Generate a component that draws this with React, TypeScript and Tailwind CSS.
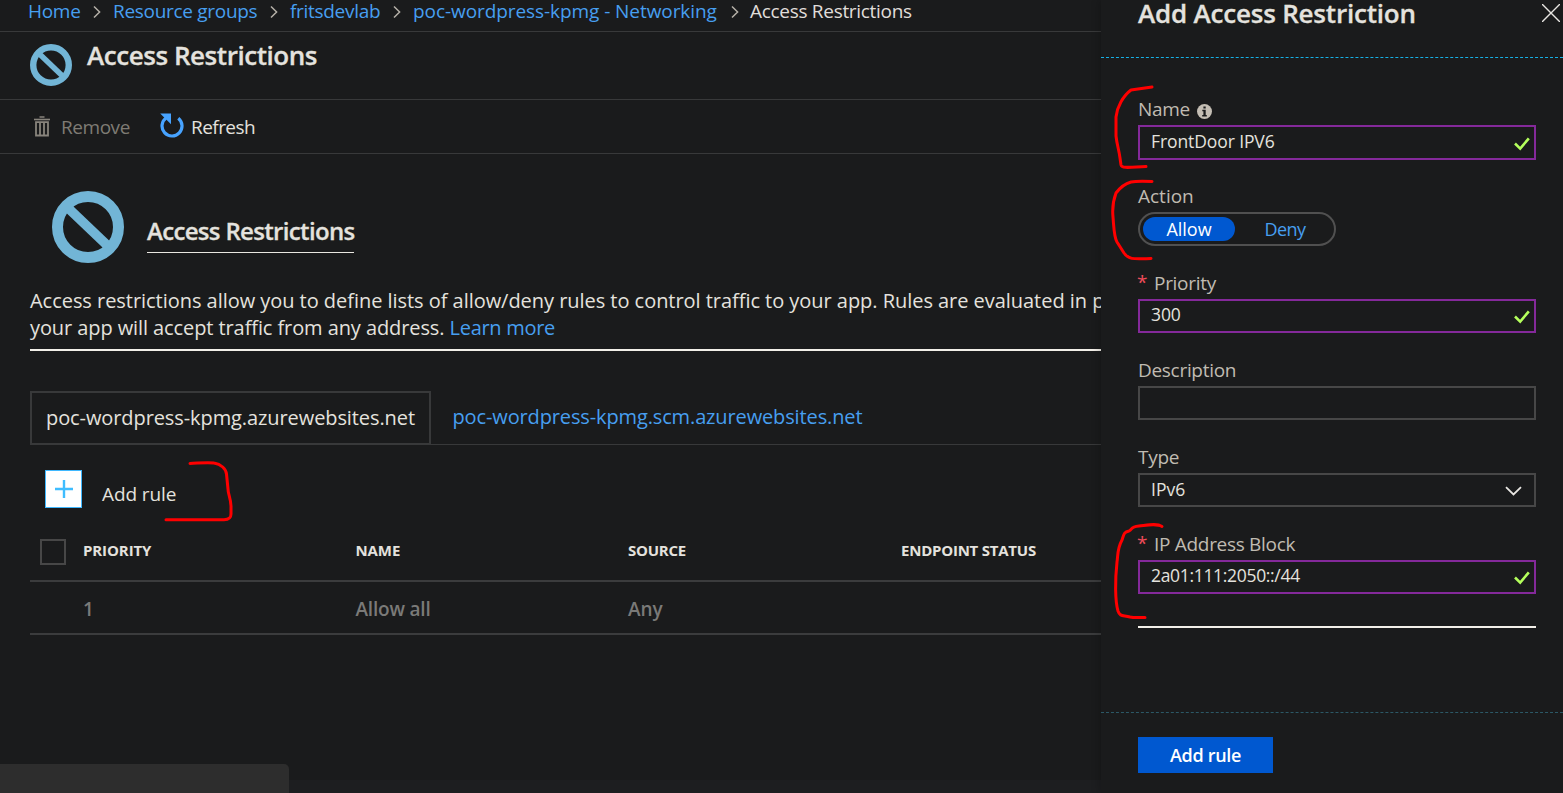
import React from "react";

const Chevron = () => (
  <svg className="h-[14px] w-[8px]" viewBox="0 0 8 14" fill="none" stroke="#b5b0a8" strokeWidth="1.5">
    <path d="M1 1.5 6.6 7 1 12.5" />
  </svg>
);

const Blocked = ({ className }: { className: string }) => (
  <svg className={className} viewBox="0 0 72 72" fill="none" stroke="#72b5d6">
    <circle cx="36" cy="36" r="30.5" strokeWidth="11" />
    <path d="M14.5 15.5 57.5 56.5" strokeWidth="9.5" />
  </svg>
);

const Check = () => (
  <svg className="mt-[2px] h-[14px] w-[16px]" viewBox="0 0 16 14" fill="none" stroke="#b4ff5c" strokeWidth="2.6">
    <path d="M1 6.5 6.2 11.6 14.8 1.4" />
  </svg>
);

const crumbs = [
  { text: "Home", box: "w-[65px]", track: "tracking-[-0.3px]" },
  { text: "Resource groups", box: "w-[157px]", track: "tracking-[-0.3px]" },
  { text: "fritsdevlab", box: "w-[103px]", track: "tracking-[-0.3px]" },
  { text: "poc-wordpress-kpmg - Networking", box: "w-[318px]", track: "tracking-[-0.07px]" },
];

function Field({
  label,
  value,
  valid,
  required,
  info,
  children,
  height = "h-[34px]",
  labelTrack = "tracking-[-0.3px]",
  valueTrack = "tracking-[-0.1px]",
}: {
  label: string;
  value?: string;
  valid?: boolean;
  required?: boolean;
  info?: boolean;
  children?: React.ReactNode;
  height?: string;
  labelTrack?: string;
  valueTrack?: string;
}) {
  return (
    <div className="h-[87px]">
      <div className="flex h-[26px] items-start text-[19px] leading-[26px] text-[#c0bbb2]">
        {required && <span className="-ml-px w-[17px] leading-[24px] text-[#f04c5a]">*</span>}
        <span className={labelTrack}>{label}</span>
        {info && (
          <svg className="mt-[8px] ml-[7px] h-[15px] w-[15px]" viewBox="0 0 15 15">
            <circle cx="7.5" cy="7.5" r="7.5" fill="#c4beb4" />
            <path d="M6.4 2.6h2.3v2H6.4zM5.3 5.8h3.4v5.2h1.1v1.5H5.2V11h1.2V7.2H5.3z" fill="#1b1c1d" />
          </svg>
        )}
      </div>
      {children ?? (
        <div
          className={`mt-[3px] flex items-center justify-between border-2 pl-[11px] ${height} ${
            valid ? "border-[#84299a] pr-[4px]" : "border-[#474747] pr-[12px]"
          }`}
        >
          <span
            className={`text-[17.5px] leading-[24px] text-[#e4e2de] ${valid ? "-mt-[4px]" : "-mt-[2px]"} ${valueTrack}`}
          >
            {value}
          </span>
          {valid && <Check />}
          {!valid && value && (
            <svg className="mt-px h-[10px] w-[17px]" viewBox="0 0 17 10" fill="none" stroke="#e8e6e2" strokeWidth="1.8">
              <path d="M1 1.2 8.5 8.4 16 1.2" />
            </svg>
          )}
        </div>
      )}
    </div>
  );
}

export default function App() {
  return (
    <div className="relative flex h-[793px] w-[1563px] overflow-hidden bg-[#1a1b1c] font-['Open_Sans','Noto_Sans',sans-serif] whitespace-nowrap text-[#e4e2de]">
      <main className="flex h-full w-[1101px] flex-col overflow-hidden">
        <nav className="flex h-[32px] items-center border-b border-[#38393a] pb-[8px] pl-[28px] text-[19px] leading-[22px] text-[#479ff0]">
          {crumbs.map((c) => (
            <React.Fragment key={c.text}>
              <span className={`-mt-[2px] ${c.box} ${c.track}`}>{c.text}</span>
              <span className="flex w-[20px]">
                <Chevron />
              </span>
            </React.Fragment>
          ))}
          <span className="-mt-[2px] -ml-px tracking-[-0.3px] text-[#e0deda]">Access Restrictions</span>
        </nav>

        <header className="flex h-[68px] items-start gap-[15px] border-b border-[#38393a] pt-[12px] pl-[30px]">
          <Blocked className="h-[42px] w-[42px]" />
          <h1 className="-mt-[7px] text-[26px] leading-[36px] font-semibold tracking-[-0.45px] [-webkit-text-stroke:0.3px]">
            Access Restrictions
          </h1>
        </header>

        <div className="flex h-[54px] items-center border-b border-[#38393a] pl-[33px] text-[19px]">
          <svg className="h-[21px] w-[18px]" viewBox="0 0 18 21" fill="none" stroke="#88847c">
            <path d="M6.5 1h5" strokeWidth="1.5" />
            <path d="M1 3.5h16" strokeWidth="1.6" />
            <path d="M3 6.2h12v13.3H3zM7 6v13M11 6v13" strokeWidth="1.8" />
          </svg>
          <span className="mt-px ml-[10px] w-[99px] tracking-[-0.45px] text-[#7f7b74]">Remove</span>
          <svg className="-mt-[2px] h-[25px] w-[24px]" viewBox="0 0 24 25" fill="none">
            <path d="M18.3 5.2A10 10 0 1 1 6 5" stroke="#47a3ff" strokeWidth="3.2" />
            <path d="M.2 .5H11V11.3z" fill="#47a3ff" />
          </svg>
          <span className="mt-px ml-[7px] tracking-[-0.55px]">Refresh</span>
        </div>

        <section className="pl-[30px]">
          <div className="flex h-[133px] items-start pt-[37px] pl-[22px]">
            <Blocked className="h-[72px] w-[72px]" />
            <h2 className="mt-[23px] ml-[23px] h-[39px] w-[207px] shrink-0 border-b border-[#e9e7e1] text-[24px] leading-[34px] font-semibold tracking-[-0.67px] [-webkit-text-stroke:0.3px]">
              Access Restrictions
            </h2>
          </div>
          <div className="h-[64px] border-b-2 border-[#f2efe8] text-[20px] leading-[27px]">
            <p className="tracking-[-0.04px]">
              Access restrictions allow you to define lists of allow/deny rules to control traffic to your app. Rules are evaluated in priority
            </p>
            <p className="tracking-[-0.09px]">
              your app will accept traffic from any address.{" "}
              <a className="tracking-[-0.3px] text-[#479ff0]">Learn more</a>
            </p>
          </div>

          <div className="mt-[40px] flex h-[54px] items-end text-[20px]">
            <div className="flex h-[54px] w-[401px] items-center border-2 border-[#38393a] pb-px pl-[14px]">
              <span className="tracking-[-0.09px]">poc-wordpress-kpmg.azurewebsites.net</span>
            </div>
            <div className="flex h-[54px] grow items-center border-b border-[#38393a] pb-[2px] pl-[21.5px] text-[#479ff0]">
              <span className="tracking-[-0.13px]">poc-wordpress-kpmg.scm.azurewebsites.net</span>
            </div>
          </div>

          <div className="flex h-[85px] items-start pt-[25px] pl-[15px]">
            <div className="flex h-[38px] w-[37px] items-center justify-center border border-[#3fb8ff] bg-white">
              <svg className="h-[18px] w-[18px]" viewBox="0 0 18 18" stroke="#3fbdff" strokeWidth="2.4">
                <path d="M9 0v18M0 9h18" />
              </svg>
            </div>
            <span className="mt-[11px] ml-[20px] text-[19px] leading-[26px] tracking-[-0.1px]">Add rule</span>
          </div>

          <div className="flex h-[52px] items-start border-b-2 border-[#3b3c3d] pl-[10px] text-[15px] leading-[20px] font-bold">
            <span className="mt-[9px] mr-[17px] h-[26px] w-[26px] border-2 border-[#474747]" />
            <span className="mt-[10px] w-[272.5px] tracking-[-0.1px]">PRIORITY</span>
            <span className="mt-[10px] w-[272.5px] tracking-[-0.1px]">NAME</span>
            <span className="mt-[10px] w-[273px] tracking-[-0.25px]">SOURCE</span>
            <span className="mt-[10px] tracking-[-0.23px]">ENDPOINT STATUS</span>
          </div>
          <div className="flex h-[53px] items-center border-b-2 border-[#3b3c3d] pt-[4px] pl-[53px] text-[19px] font-semibold text-[#7a7a78]">
            <span className="w-[272.5px]">1</span>
            <span className="w-[272.5px] tracking-[-0.2px]">Allow all</span>
            <span className="tracking-[-0.1px]">Any</span>
          </div>
        </section>

        <footer className="mt-auto flex h-[29px] items-end">
          <div className="h-[29px] w-[289px] rounded-tr-[5px] bg-[#2d2d2d]" />
          <div className="h-[13px] grow bg-[#1d1e20]" />
        </footer>
      </main>

      <aside className="flex h-full w-[462px] flex-col bg-[#1a1b1c] shadow-[-2px_0_8px_rgba(0,0,0,0.2)]">
        <div className="flex h-[58px] items-start justify-between border-b border-dashed border-[#16b0e4] pr-[3px] pl-[37px]">
          <h2 className="text-[26px] leading-[26px] font-semibold tracking-[-0.2px] [-webkit-text-stroke:0.3px]">
            Add Access Restriction
          </h2>
          <svg className="mt-[4px] h-[18px] w-[18px]" viewBox="0 0 18 18" stroke="#e8e6e2" strokeWidth="1.4">
            <path d="M0 0 18 18M18 0 0 18" />
          </svg>
        </div>

        <form className="mt-[38px] ml-[37px] h-[532px] w-[398px] border-b-2 border-[#f2efe8]">
          <Field label="Name" value="FrontDoor IPV6" valid info height="h-[35px]" />
          <Field label="Action" labelTrack="tracking-[0px]">
            <div className="mt-[3px] flex h-[34px] w-[198px] items-center rounded-full border-2 border-[#505050] px-[3px] text-[18px]">
              <span className="flex h-[24px] w-[92px] items-center justify-center rounded-full bg-[#0058d0] pt-px text-white">
                Allow
              </span>
              <span className="flex grow justify-center pt-px pl-[4px] tracking-[-0.5px] text-[#479ff0]">Deny</span>
            </div>
          </Field>
          <Field label="Priority" value="300" valid required />
          <Field label="Description" />
          <Field label="Type" value="IPv6" valueTrack="tracking-[0px]" />
          <Field label="IP Address Block" value="2a01:111:2050::/44" valid required valueTrack="tracking-[-0.32px]" />
        </form>

        <div className="mt-auto h-[81px] border-t border-dashed border-[#2c5866] pt-[24px] pl-[37px]">
          <button className="h-[36px] w-[135px] bg-[#0058d0] pt-px text-[18px] font-semibold tracking-[-0.3px] text-white">
            Add rule
          </button>
        </div>
      </aside>

      <svg
        className="pointer-events-none absolute inset-0 h-[793px] w-[1563px]"
        viewBox="0 0 1563 793"
        fill="none"
        stroke="#ff0000"
        strokeWidth="3"
        strokeLinecap="round"
        strokeLinejoin="round"
      >
        <path d="M190 463.500C200 463 208 462 214 463C221 464 226 469 226.500 474L228 489C228 494 230.500 497 231 506V514C231 518 229 519.500 224 519.800H166" />
        <path d="M1152 87 1131 90C1123 96 1117 107 1116 117V136C1117 145 1119 150 1120 158L1121 165C1122 169 1132 167 1146 166.500" />
        <path d="M1152 181.500C1142 181 1136 181 1131 182C1124 184 1119 189 1116 193C1113 201 1112 207 1113 217C1114 229 1114 237 1117 242L1124 253C1129 260 1134 259 1151 258.500" />
        <path d="M1162 526.500C1157 523 1148 525 1139 526C1130 527 1133 529 1129 531C1124 532 1124 534 1122 540C1117 549 1118 556 1117 562C1115 580 1115 601 1118 611C1120 617 1123 615 1130 617C1134 618 1138 617.500 1145 617.500" />
      </svg>
    </div>
  );
}
